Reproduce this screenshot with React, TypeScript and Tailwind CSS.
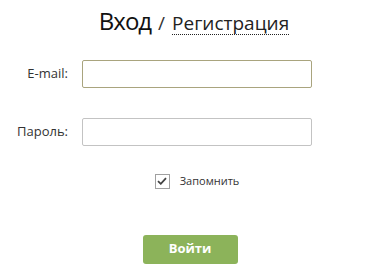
import React, { useState } from 'react';

const App = () => {
  const [remember, setRemember] = useState(true);

  return (
    <div className="w-[382px] h-[274px] bg-white text-[#222] font-['Open_Sans',sans-serif] overflow-hidden">
      {/* Header */}
      <div className="flex items-baseline justify-center pt-[6px] ml-[6px] h-[40px]">
        <span className="text-[24px] leading-[30px] tracking-[-1px] text-[#111]">Вход</span>
        <span className="text-[19px] mx-[7px] text-[#333]">/</span>
        <span className="text-[19px] text-[#222] border-b border-dotted border-[#222] leading-[22px]">Регистрация</span>
      </div>

      <form className="flex flex-col mt-[20px]">
        <div className="flex items-center h-[28px]">
          <label className="w-[68px] text-right text-[13px] text-[#333]">E-mail:</label>
          <input
            type="text"
            className="ml-[14px] w-[230px] h-[28px] border border-[#a9a47e] rounded-[2px] bg-white outline-none"
          />
        </div>

        <div className="flex items-center h-[28px] mt-[30px]">
          <label className="w-[68px] text-right text-[13px] text-[#333]">Пароль:</label>
          <input
            type="password"
            className="ml-[14px] w-[230px] h-[28px] border border-[#c3c3c3] rounded-[2px] bg-white outline-none"
          />
        </div>

        <label className="flex items-center justify-center ml-[12px] mt-[27px] gap-[10px] cursor-pointer">
          <button
            type="button"
            onClick={() => setRemember(!remember)}
            className="w-[15px] h-[15px] border border-[#a0a0a0] bg-white flex items-center justify-center"
          >
            {remember && (
              <svg width="10" height="8" viewBox="0 0 10 8">
                <path d="M1 4.2 L3.8 6.8 L9 1.2" fill="none" stroke="#444" strokeWidth="1.8" />
              </svg>
            )}
          </button>
          <span className="text-[11px] text-[#333]">Запомнить</span>
        </label>

        <div className="flex justify-center ml-[-2px] mt-[45px]">
          <button
            type="button"
            className="w-[95px] h-[29px] rounded-[3px] bg-[#8cb35a] text-white text-[13px] font-bold"
          >
            Войти
          </button>
        </div>
      </form>
    </div>
  );
};

export default App;
